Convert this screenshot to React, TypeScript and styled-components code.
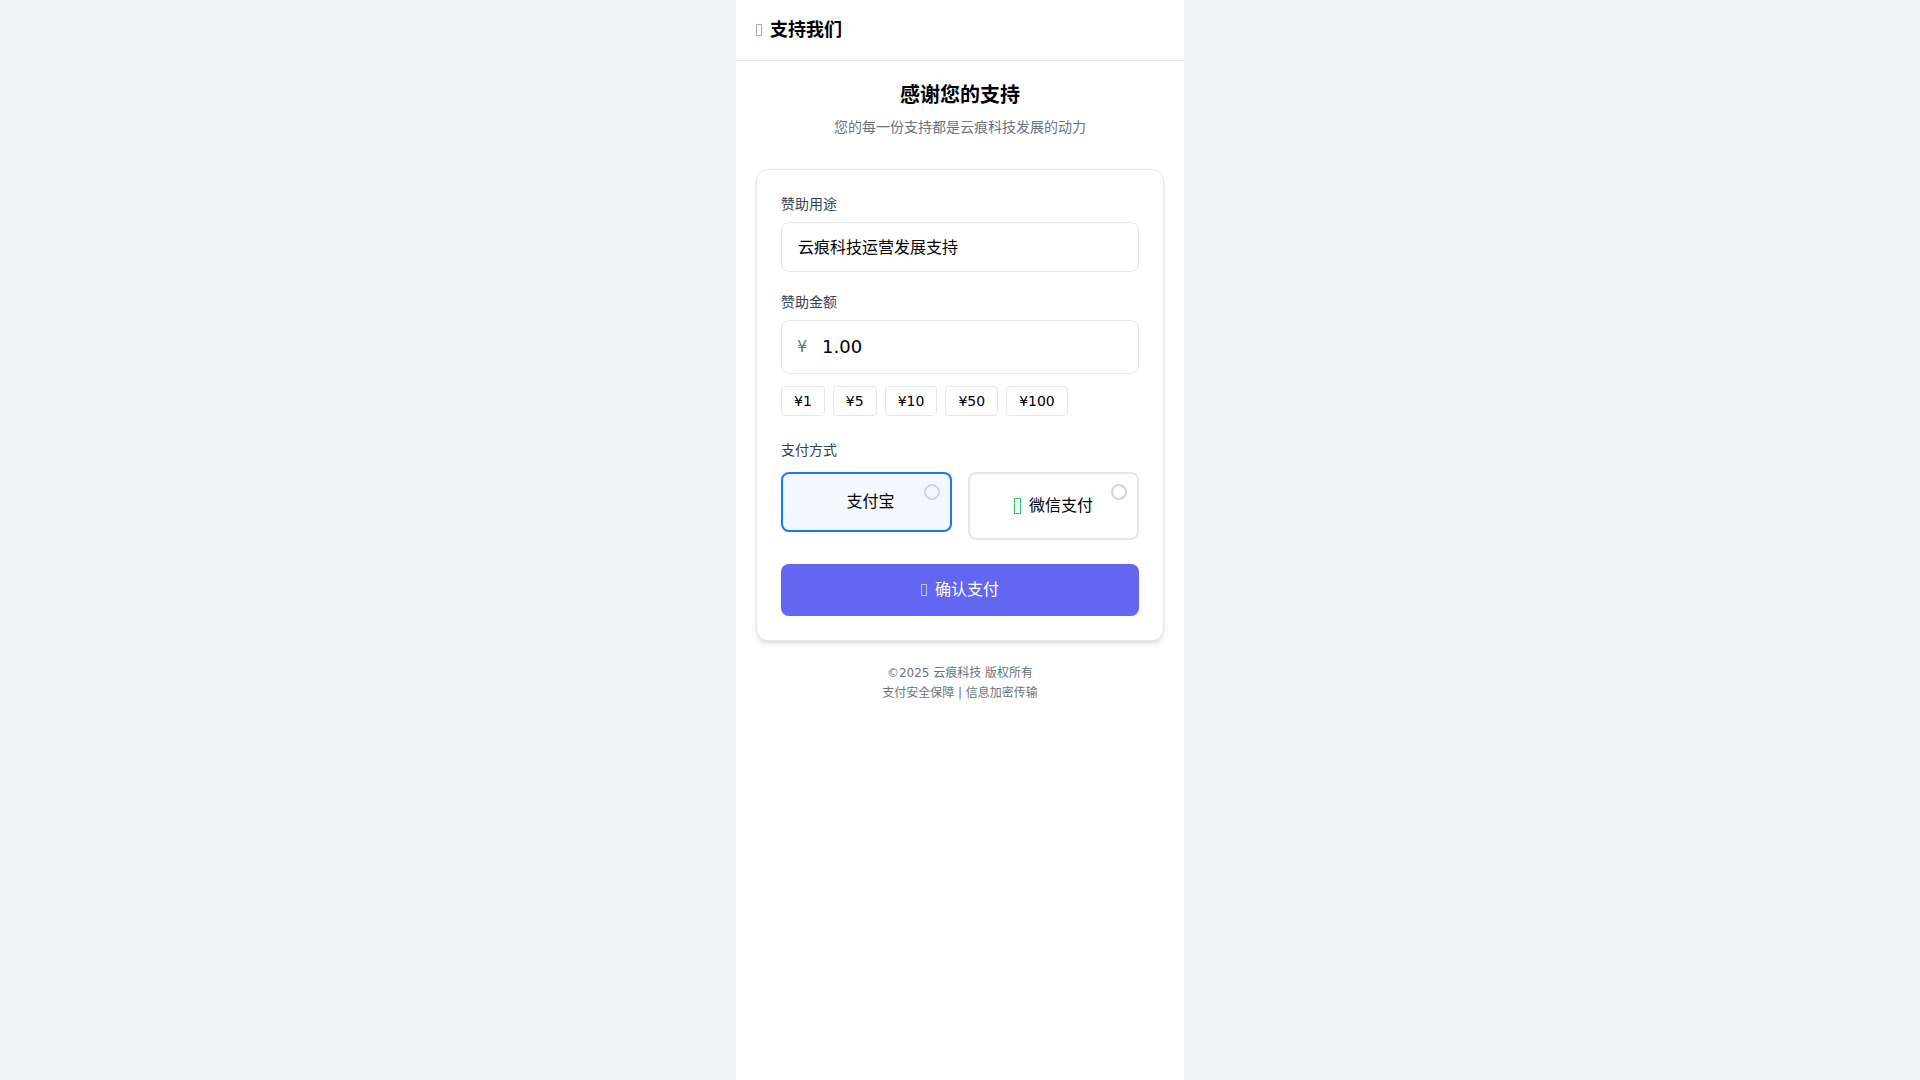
import React, { useState } from "react";
import styled, { createGlobalStyle } from "styled-components";

const GlobalStyle = createGlobalStyle`
  *, *::before, *::after { box-sizing: border-box; }
  body {
    margin: 0;
    background: #f3f4f6;
    color: #000;
    font: 16px/24px "DejaVu Sans", "Noto Sans CJK SC", sans-serif;
  }
  h1, h2, p { margin: 0; }
  button, input { font-family: inherit; color: inherit; }
`;

const Page = styled.div`
  max-width: 448px;
  min-height: 100vh;
  margin: 0 auto;
  background: #fff;
`;

const Header = styled.header`
  display: flex;
  align-items: center;
  gap: 8px;
  padding: 16px 20px;
  border-bottom: 1px solid #e5e7eb;
`;

const HeaderTitle = styled.h1`
  font-size: 18px;
  line-height: 28px;
  font-weight: 700;
`;

const Main = styled.main`
  padding: 16px 20px;
`;

const Intro = styled.section`
  margin-bottom: 32px;
  text-align: center;
`;

const IntroTitle = styled.h2`
  margin-bottom: 4px;
  font-size: 20px;
  line-height: 36px;
  font-weight: 700;
`;

const IntroText = styled.p`
  font-size: 14px;
  line-height: 20px;
  color: #6b7280;
`;

const Card = styled.form`
  display: flex;
  flex-direction: column;
  padding: 24px;
  border: 1px solid #e5e7eb;
  border-radius: 12px;
  background: #fff;
  box-shadow: 0 4px 6px -1px rgba(0, 0, 0, 0.1), 0 2px 4px -2px rgba(0, 0, 0, 0.1);
`;

const Field = styled.div`
  display: flex;
  flex-direction: column;
  gap: 8px;
  margin-bottom: 20px;
`;

const FieldLabel = styled.label`
  font-size: 14px;
  line-height: 20px;
  color: #374151;
`;

const TextInput = styled.input<{ $amount?: boolean }>`
  display: block;
  width: 100%;
  height: ${(p) => (p.$amount ? 54 : 50)}px;
  padding: 11px 16px 13px ${(p) => (p.$amount ? 40 : 16)}px;
  border: 1px solid #e5e7eb;
  border-radius: 8px;
  background: #fff;
  font-size: ${(p) => (p.$amount ? 18 : 16)}px;
  line-height: ${(p) => (p.$amount ? 28 : 24)}px;
  outline: none;
`;

const AmountBox = styled.div`
  position: relative;
`;

const Currency = styled.span`
  position: absolute;
  left: 16px;
  top: 50%;
  transform: translateY(-50%);
  color: #6b7280;
`;

const QuickRow = styled.div`
  display: flex;
  gap: 8px;
  margin: 4px 0;
`;

const QuickButton = styled.button`
  padding: 4px 12px;
  border: 1px solid #e5e7eb;
  border-radius: 4px;
  background: #fff;
  font-size: 14px;
  line-height: 20px;
  cursor: pointer;
`;

const Methods = styled.fieldset`
  min-width: 0;
  margin: 0 0 24px;
  padding: 0;
  border: 0;
`;

const MethodsLegend = styled.legend`
  margin-bottom: 12px;
  padding: 0;
  font-size: 14px;
  line-height: 20px;
  color: #374151;
`;

const MethodGrid = styled.div`
  display: grid;
  grid-template-columns: 1fr 1fr;
  align-items: start;
  gap: 16px;
`;

const Method = styled.label<{ $selected: boolean }>`
  position: relative;
  display: flex;
  align-items: center;
  justify-content: center;
  gap: 8px;
  padding: 16px;
  border: 2px solid ${(p) => (p.$selected ? "#1677ff" : "#e5e7eb")};
  border-radius: 8px;
  background: ${(p) => (p.$selected ? "rgba(22, 119, 255, 0.05)" : "#fff")};
  cursor: pointer;
`;

const MethodRadio = styled.input`
  appearance: none;
  position: absolute;
  top: 10px;
  right: 10px;
  width: 16px;
  height: 16px;
  margin: 0;
  border: 2px solid #d4d4d4;
  border-radius: 50%;
`;

const MethodIcon = styled.span<{ $large?: boolean }>`
  display: flex;
  align-items: center;
  height: ${(p) => (p.$large ? 32 : 24)}px;
`;

const Submit = styled.button`
  display: flex;
  align-items: center;
  justify-content: center;
  gap: 8px;
  padding: 14px 16px;
  border: 0;
  border-radius: 8px;
  background: #6366f1;
  color: #fff;
  font-size: 16px;
  line-height: 24px;
  cursor: pointer;
`;

const Footer = styled.footer`
  display: flex;
  flex-direction: column;
  gap: 4px;
  padding: 8px 20px;
  text-align: center;
  font-size: 12px;
  line-height: 16px;
  color: #6b7280;
`;

function BoxGlyph({ width, height, color, opacity = 1 }: {
  width: number; height: number; color: string; opacity?: number;
}) {
  return (
    <svg width={width} height={height} aria-hidden="true">
      <rect x="0.5" y="0.5" width={width - 1} height={height - 1} fill="none" stroke={color} strokeOpacity={opacity} />
    </svg>
  );
}

const amounts = [1, 5, 10, 50, 100];

export default function App() {
  const [purpose, setPurpose] = useState("云痕科技运营发展支持");
  const [amount, setAmount] = useState("1.00");
  const [method, setMethod] = useState("alipay");

  return (
    <>
      <GlobalStyle />
      <Page>
        <Header>
          <BoxGlyph width={6} height={12} color="#6366f1" opacity={0.6} />
          <HeaderTitle>支持我们</HeaderTitle>
        </Header>
        <Main>
          <Intro>
            <IntroTitle>感谢您的支持</IntroTitle>
            <IntroText>您的每一份支持都是云痕科技发展的动力</IntroText>
          </Intro>
          <Card onSubmit={(e) => e.preventDefault()}>
            <Field>
              <FieldLabel htmlFor="purpose">赞助用途</FieldLabel>
              <TextInput id="purpose" value={purpose} onChange={(e) => setPurpose(e.target.value)} />
            </Field>
            <Field>
              <FieldLabel htmlFor="amount">赞助金额</FieldLabel>
              <AmountBox>
                <Currency>¥</Currency>
                <TextInput $amount id="amount" inputMode="decimal" value={amount} onChange={(e) => setAmount(e.target.value)} />
              </AmountBox>
              <QuickRow>
                {amounts.map((n) => (
                  <QuickButton key={n} type="button" onClick={() => setAmount(n.toFixed(2))}>{`¥${n}`}</QuickButton>
                ))}
              </QuickRow>
            </Field>
            <Methods>
              <MethodsLegend>支付方式</MethodsLegend>
              <MethodGrid>
                <Method $selected={method === "alipay"}>
                  <MethodIcon />
                  <span>支付宝</span>
                  <MethodRadio type="radio" name="method" checked={method === "alipay"} onChange={() => setMethod("alipay")} />
                </Method>
                <Method $selected={method === "wechat"}>
                  <MethodIcon $large>
                    <BoxGlyph width={7} height={16} color="#2dc76d" />
                  </MethodIcon>
                  <span>微信支付</span>
                  <MethodRadio type="radio" name="method" checked={method === "wechat"} onChange={() => setMethod("wechat")} />
                </Method>
              </MethodGrid>
            </Methods>
            <Submit type="submit">
              <BoxGlyph width={6} height={12} color="#fff" opacity={0.6} />
              <span>确认支付</span>
            </Submit>
          </Card>
        </Main>
        <Footer>
          <p>©2025 云痕科技 版权所有</p>
          <p>支付安全保障 | 信息加密传输</p>
        </Footer>
      </Page>
    </>
  );
}
